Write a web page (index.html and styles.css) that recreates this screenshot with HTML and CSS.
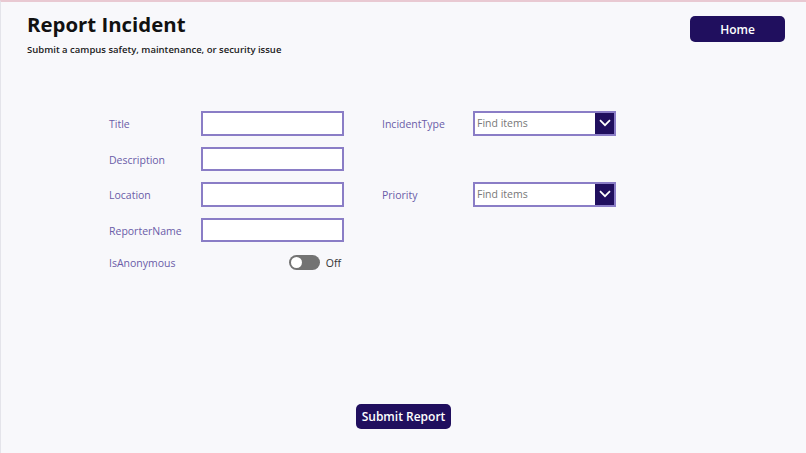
FILE: index.html
```html
<!DOCTYPE html>
<html lang="en">
<head>
  <meta charset="UTF-8">
  <title>Report Incident</title>
  <link rel="stylesheet" href="styles.css">
</head>
<body>
  <div class="screen">

    <!-- header -->
    <div class="header">
      <div class="heading">
        <h1>Report Incident</h1>
        <p class="subtitle">Submit a campus safety, maintenance, or security issue</p>
      </div>
      <button class="btn btn-home">Home</button>
    </div>

    <!-- form -->
    <div class="form">
      <label class="field-label">Title</label>
      <input class="text-input" type="text">
      <label class="field-label">IncidentType</label>
      <div class="combo">
        <input type="text" placeholder="Find items">
        <span class="combo-btn">
          <svg width="12" height="8" viewBox="0 0 12 8"><path d="M1 1.2 6 6.2 11 1.2" fill="none" stroke="#fff" stroke-width="1.7"/></svg>
        </span>
      </div>

      <label class="field-label">Description</label>
      <input class="text-input" type="text">
      <span></span>
      <span></span>

      <label class="field-label">Location</label>
      <input class="text-input" type="text">
      <label class="field-label">Priority</label>
      <div class="combo">
        <input type="text" placeholder="Find items">
        <span class="combo-btn">
          <svg width="12" height="8" viewBox="0 0 12 8"><path d="M1 1.2 6 6.2 11 1.2" fill="none" stroke="#fff" stroke-width="1.7"/></svg>
        </span>
      </div>

      <label class="field-label">ReporterName</label>
      <input class="text-input" type="text">
      <span></span>
      <span></span>

      <label class="field-label toggle-label">IsAnonymous</label>
      <div class="toggle-wrap">
        <span class="toggle"><span class="knob"></span></span>
        <span class="toggle-text">Off</span>
      </div>
    </div>

    <div class="footer">
      <button class="btn btn-submit">Submit Report</button>
    </div>
  </div>
</body>
</html>
```

FILE: styles.css
```css
body {
  margin: 0;
  padding: 0;
  font-family: 'Open Sans', 'Noto Sans', sans-serif;
  background: #f8f8fb;
}
.screen {
  height: 451px;
  border-top: 2px solid #e9c9d2;
  border-left: 1px solid #e4e4ea;
  display: flex;
  flex-direction: column;
}
.header {
  display: flex;
  justify-content: space-between;
  align-items: flex-start;
  padding: 8px 21px 0 26px;
}
h1 {
  margin: 0;
  font-size: 20.4px;
  font-weight: 700;
  color: #111;
  line-height: 28px;
}
.subtitle {
  margin: 5px 0 0;
  font-size: 9.5px;
  font-weight: 600;
  color: #1a1a1a;
}
.btn {
  background-color: #200f5e;
  color: white;
  border: none;
  border-radius: 5px;
  font-family: inherit;
  font-weight: 600;
  white-space: nowrap;
  padding: 0;
  cursor: pointer;
}
.btn-home {
  margin-top: 6px;
  width: 95px;
  height: 26px;
  font-size: 12px;
}
.form {
  display: grid;
  grid-template-columns: 92px 181px 91px 143px;
  grid-auto-rows: 24.5px;
  row-gap: 11px;
  align-items: center;
  margin: 55px 0 0 108px;
}
.field-label {
  font-size: 10.5px;
  color: #6a5ca8;
  padding-top: 2px;
}
.text-input {
  box-sizing: border-box;
  width: 143px;
  height: 24.5px;
  border: 2px solid #8a7dc6;
  background: white;
  margin: 0;
}
.combo {
  display: flex;
  height: 24.5px;
  box-sizing: border-box;
  border: 2px solid #8a7dc6;
  background: white;
}
.combo input {
  flex: 1;
  min-width: 0;
  border: none;
  outline: none;
  padding: 0 2px;
  font-family: inherit;
  font-size: 10.5px;
  background: transparent;
}
.combo input::placeholder {
  color: #777;
}
.combo-btn {
  width: 19px;
  background: #200f5e;
  display: flex;
  align-items: center;
  justify-content: center;
}
.toggle-label {
  margin-top: -6px;
}
.toggle-wrap {
  width: 143px;
  display: flex;
  align-items: center;
  justify-content: flex-end;
  gap: 6px;
  padding-right: 3px;
  box-sizing: border-box;
  margin-top: -5px;
}
.toggle {
  flex: none;
  width: 31px;
  height: 15px;
  border-radius: 8px;
  background: #737373;
  display: flex;
  align-items: center;
  padding-left: 2px;
  box-sizing: border-box;
}
.knob {
  width: 11px;
  height: 11px;
  border-radius: 50%;
  background: white;
}
.toggle-text {
  font-size: 10.5px;
  color: #333;
}
.footer {
  margin-top: auto;
  padding-bottom: 24px;
  display: flex;
  justify-content: center;
}
.btn-submit {
  width: 95px;
  height: 25px;
  font-size: 12px;
}
```
